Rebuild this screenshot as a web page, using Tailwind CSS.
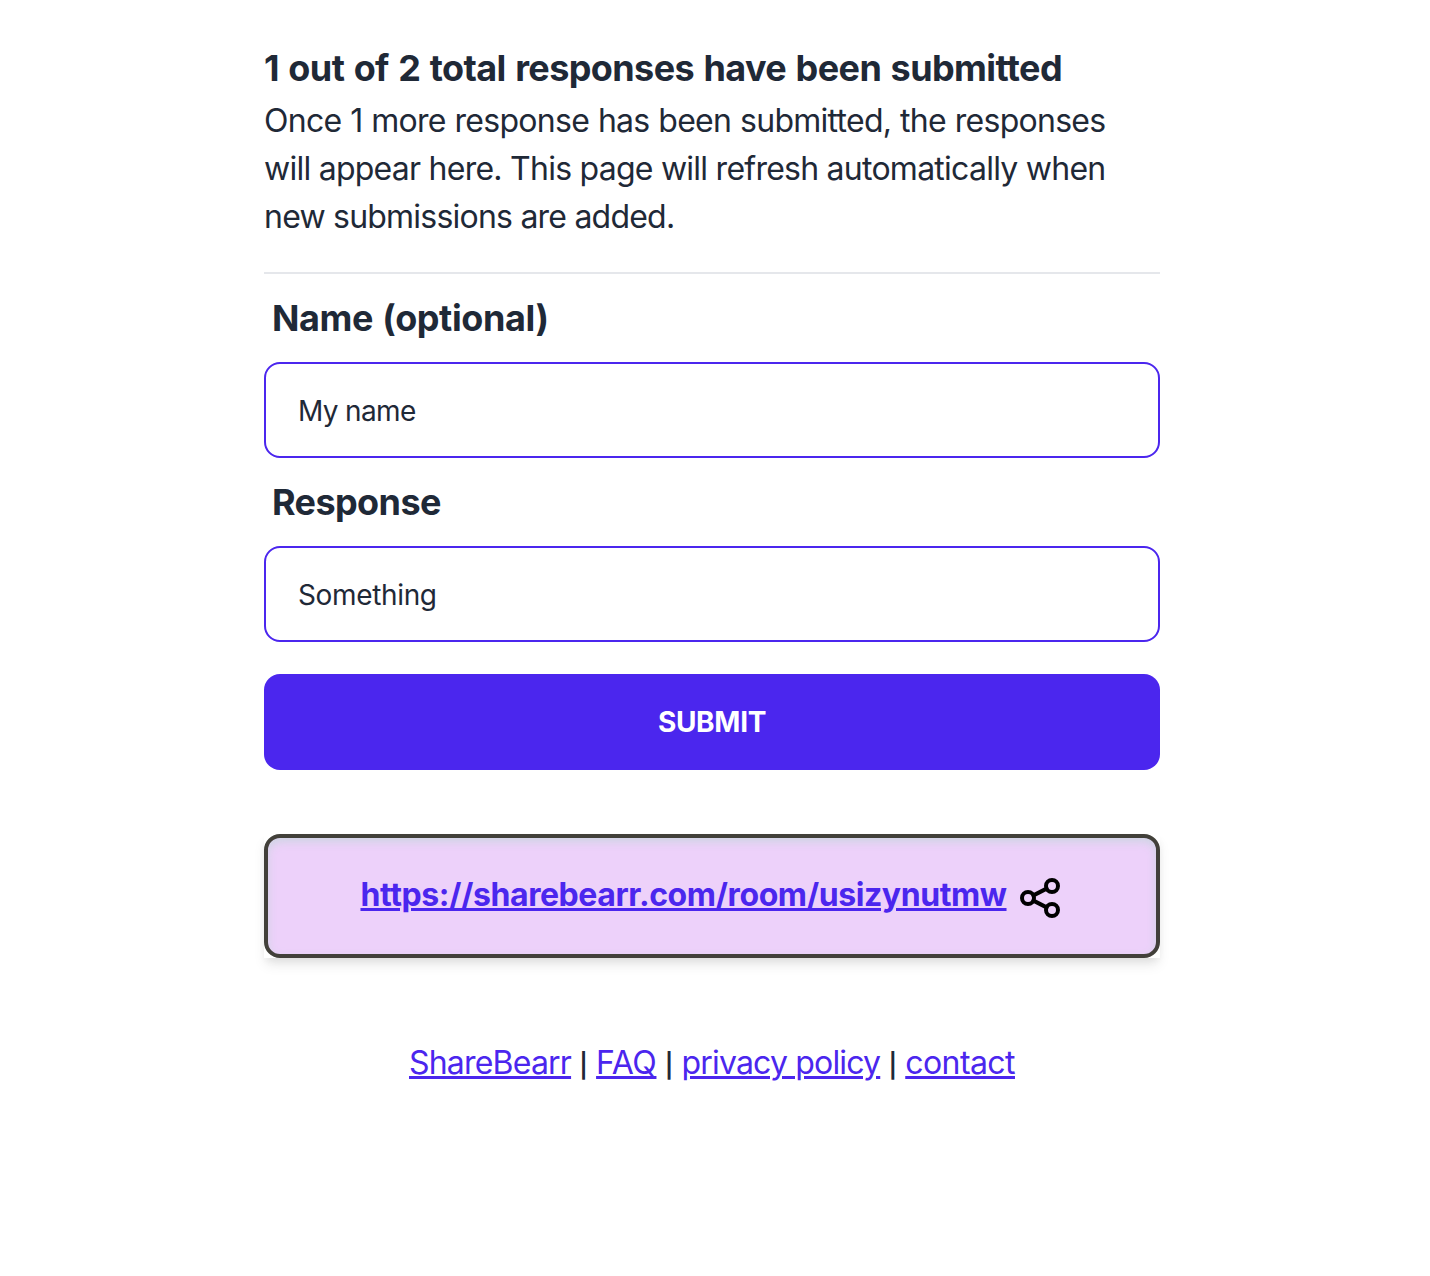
<!DOCTYPE html>
<html lang="en">
<head>
    <meta charset="UTF-8">
    <meta name="viewport" content="width=device-width, initial-scale=1.0">
    <title>ShareBearr</title>
    <script src="https://cdn.jsdelivr.net/npm/@tailwindcss/browser@4"></script>
</head>
<body class="min-h-screen bg-white text-[#1f2937] font-['Inter',sans-serif]">
    <main class="ml-[264px] w-[896px] pt-10">
        <h1 class="text-[36px] leading-[56px] font-bold tracking-[-0.6px] [word-spacing:1.5px] whitespace-nowrap">1 out of 2 total responses have been submitted</h1>
        <p class="pt-px text-[32px] leading-[48px]">
            <span class="block whitespace-nowrap tracking-[-0.72px] [word-spacing:0.5px]">Once 1 more response has been submitted, the responses</span>
            <span class="block whitespace-nowrap tracking-[-0.75px]">will appear here. This page will refresh automatically when</span>
            <span class="block whitespace-nowrap tracking-[-0.78px]">new submissions are added.</span>
        </p>
        <hr class="mt-[31px] border-t-2 border-gray-200">

        <form onsubmit="return false">
            <label for="name" class="block py-4 px-2 text-[36px] leading-[56px] font-bold tracking-[-0.4px] [word-spacing:1px]">Name (optional)</label>
            <input id="name" type="text" value="My name" class="block w-full h-24 px-8 pt-0.5 rounded-2xl border-2 border-[#4b26ee] text-[28px] tracking-[-0.65px] outline-none">
            <label for="response" class="block py-4 px-2 text-[36px] leading-[56px] font-bold tracking-[-0.6px]">Response</label>
            <input id="response" type="text" value="Something" class="block w-full h-24 px-8 pt-0.5 rounded-2xl border-2 border-[#4b26ee] text-[28px] tracking-[-0.35px] outline-none">
            <button type="submit" class="block mt-8 w-full h-24 rounded-2xl bg-[#4b26ee] text-white text-[28px] font-bold tracking-[-0.3px]">SUBMIT</button>
        </form>

        <div class="mt-16 shadow-[0_8px_12px_-2px_rgba(0,0,0,0.1),0_4px_8px_-2px_rgba(0,0,0,0.06)]">
            <div class="h-[124px] flex items-center justify-center gap-[9px] rounded-2xl border-4 border-[#42403a] bg-[#edd1fa] shadow-[inset_0_4px_8px_0_rgba(190,215,215,0.65)]">
                <a href="#" class="pb-0.5 text-[32px] leading-[48px] font-bold tracking-[-0.42px] underline decoration-[3px] text-[#4b26ee]">https://sharebearr.com/room/usizynutmw</a>
                <svg class="size-12 mt-1" viewBox="0 0 24 24" fill="none" stroke="#000" stroke-width="2" stroke-linecap="round" stroke-linejoin="round">
                    <circle cx="6" cy="12" r="3"/>
                    <circle cx="18" cy="6" r="3"/>
                    <circle cx="18" cy="18" r="3"/>
                    <path d="M8.7 10.7L15.3 7.3M8.7 13.3L15.3 16.7"/>
                </svg>
            </div>
        </div>

        <footer class="mt-[81px] flex items-baseline justify-center text-[32px] leading-[48px]">
            <a href="#" class="underline decoration-[3px] tracking-[-0.8px] text-[#4b26ee]">ShareBearr</a>
            <span class="w-[25px] text-center text-[24px] font-semibold">|</span>
            <a href="#" class="underline decoration-[3px] tracking-[-0.35px] text-[#4b26ee]">FAQ</a>
            <span class="w-[25px] text-center text-[24px] font-semibold">|</span>
            <a href="#" class="underline decoration-[3px] tracking-[-0.82px] text-[#4b26ee]">privacy policy</a>
            <span class="w-[25px] text-center text-[24px] font-semibold">|</span>
            <a href="#" class="underline decoration-[3px] tracking-[-0.57px] text-[#4b26ee]">contact</a>
        </footer>
    </main>
</body>
</html>
